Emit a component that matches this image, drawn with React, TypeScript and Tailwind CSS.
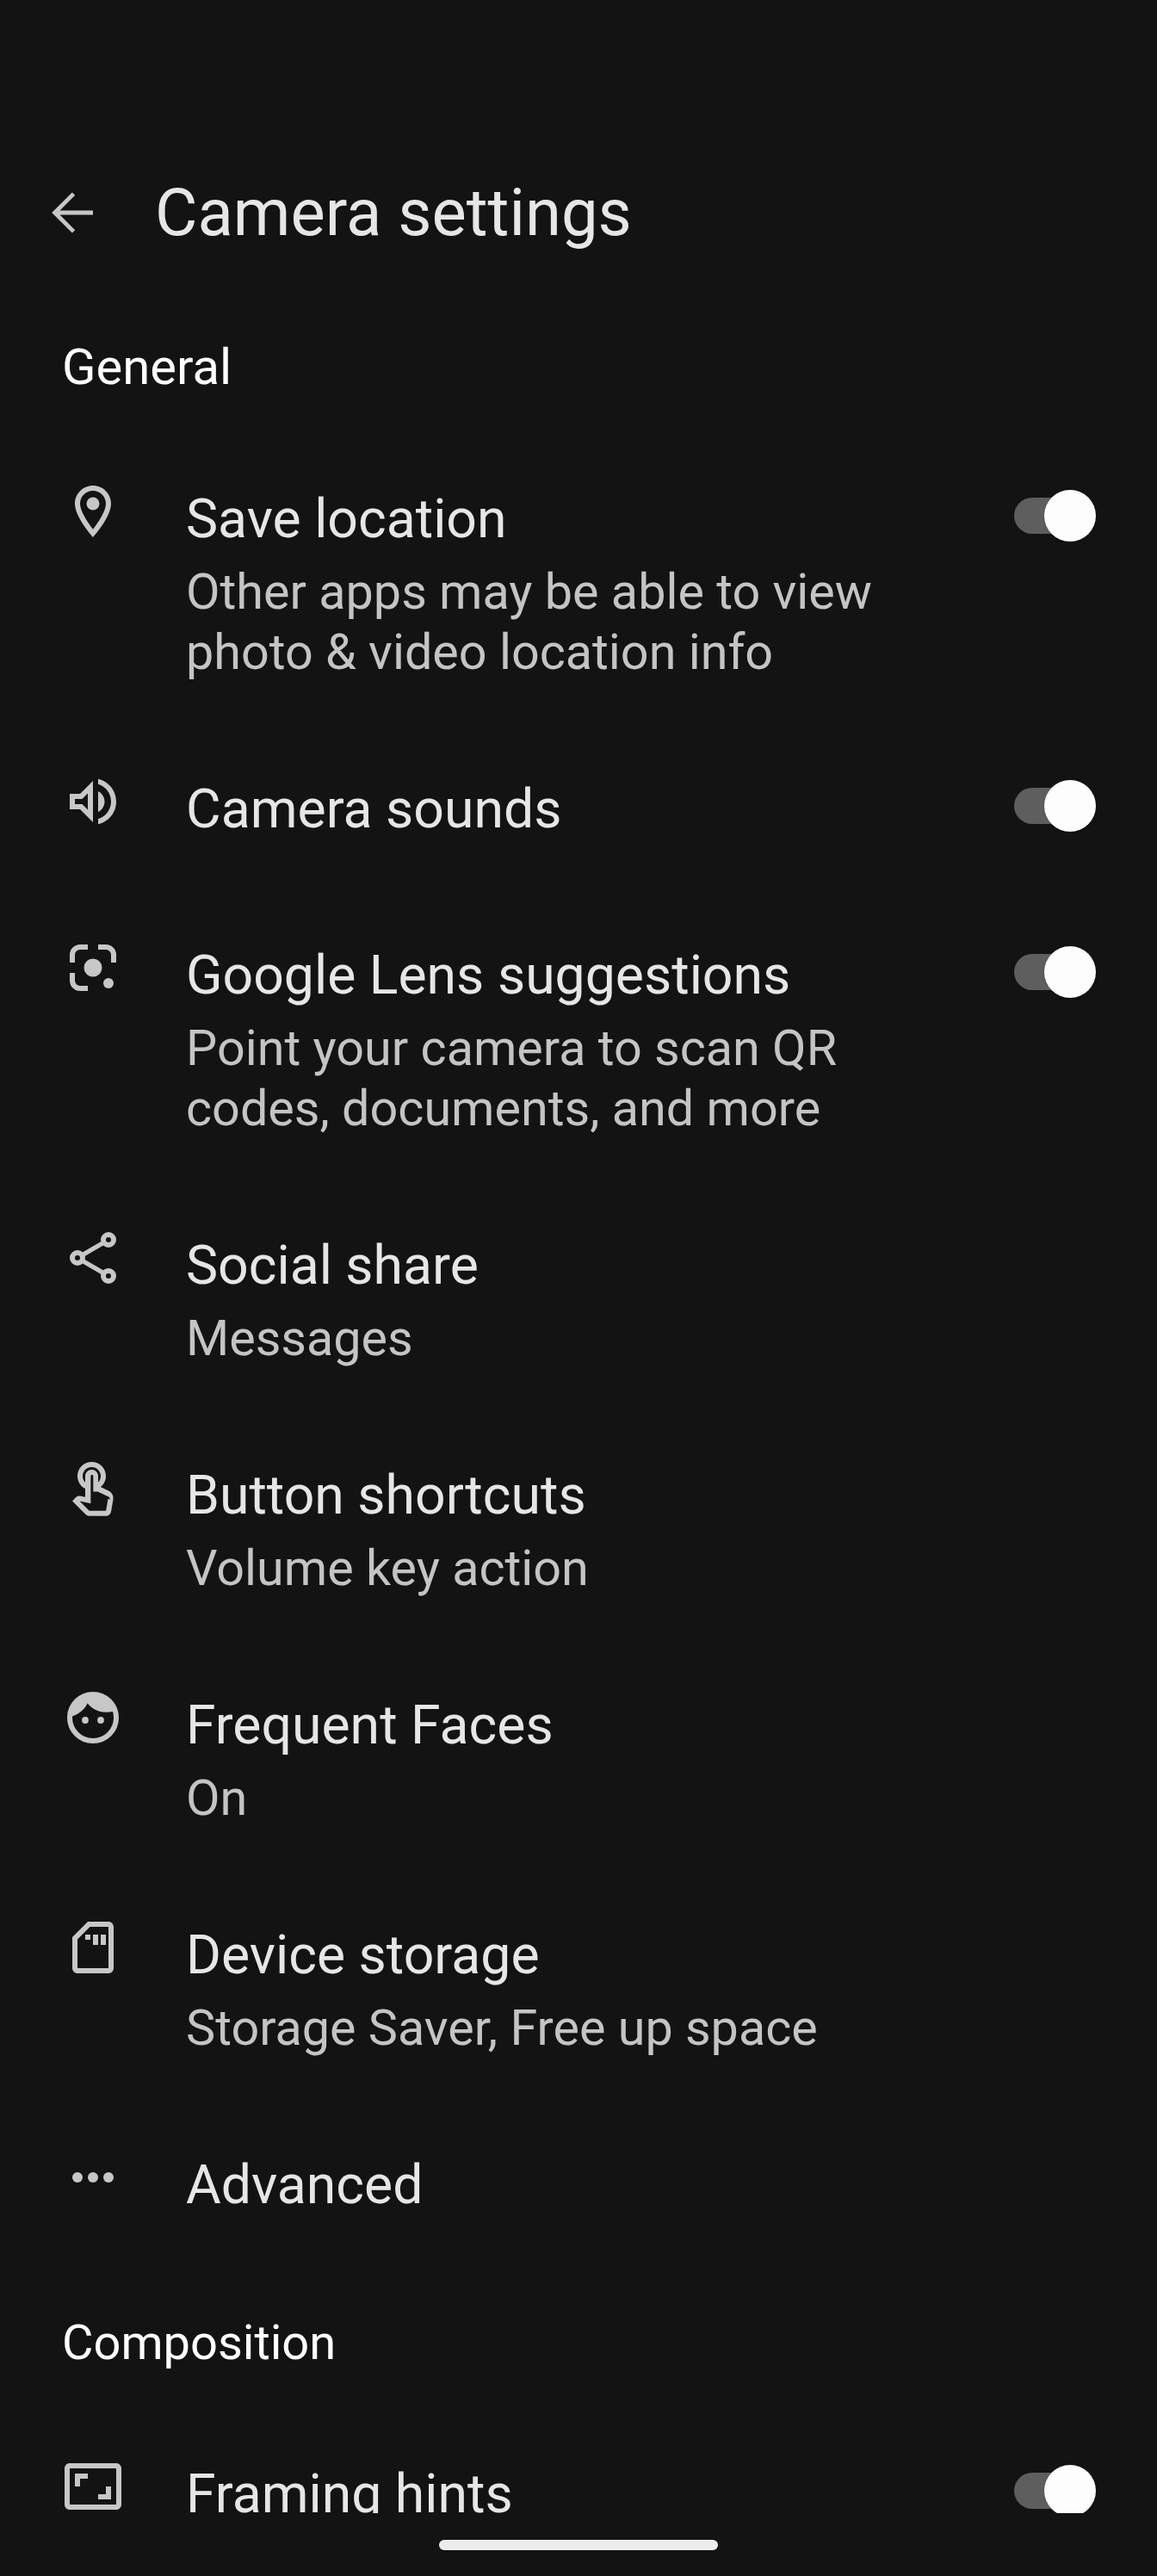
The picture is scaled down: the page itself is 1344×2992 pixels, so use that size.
import type { ReactNode } from "react";

function Toggle() {
  return (
    <div className="relative w-[95px] h-[60px] shrink-0 mt-[3px] flex items-center">
      <div className="w-[70px] h-[42px] rounded-full bg-[#5e5e5e]" />
      <div className="absolute right-0 top-0 w-[60px] h-[60px] rounded-full bg-[#fdfdfd] shadow" />
    </div>
  );
}

function Icon({ children }: { children: ReactNode }) {
  return (
    <svg viewBox="0 0 24 24" className="w-[72px] h-[72px] text-[#c7c7c7]" fill="currentColor">
      {children}
    </svg>
  );
}

const Pin = (
  <Icon>
    <path d="M12 2C8.14 2 5 5.14 5 9c0 5.25 7 13 7 13s7-7.75 7-13c0-3.86-3.14-7-7-7zM7 9c0-2.76 2.24-5 5-5s5 2.24 5 5c0 2.88-2.88 7.19-5 9.88C9.92 16.21 7 11.85 7 9z" />
    <circle cx="12" cy="9" r="2.5" />
  </Icon>
);

const Speaker = (
  <Icon>
    <path d="M3 9v6h4l5 5V4L7 9H3zm7-.17v6.34L7.83 13H5v-2h2.83L10 8.83zM16.5 12c0-1.77-1.02-3.29-2.5-4.03v8.05c1.48-.73 2.5-2.25 2.5-4.02zM14 3.23v2.06c2.89.86 5 3.54 5 6.71s-2.11 5.85-5 6.71v2.06c4.01-.91 7-4.49 7-8.77 0-4.28-2.99-7.86-7-8.77z" />
  </Icon>
);

const Lens = (
  <Icon>
    <path d="M10 3H7a4 4 0 0 0-4 4v3h2V7a2 2 0 0 1 2-2h3zM14 3h3a4 4 0 0 1 4 4v3h-2V7a2 2 0 0 0-2-2h-3zM3 14v3a4 4 0 0 0 4 4h3v-2H7a2 2 0 0 1-2-2v-3z" />
    <circle cx="12" cy="12" r="3.5" />
    <circle cx="18" cy="18" r="2" />
  </Icon>
);

const Share = (
  <Icon>
    <g fill="none" stroke="currentColor">
      <path strokeWidth="1.8" d="M16.3 6 7.7 11M7.7 13l8.6 5" />
      <circle cx="6" cy="12" r="2" strokeWidth="2" />
      <circle cx="18" cy="5" r="2" strokeWidth="2" />
      <circle cx="18" cy="19" r="2" strokeWidth="2" />
    </g>
  </Icon>
);

const Touch = (
  <Icon>
    <path
      transform="translate(0 .85)"
      d="M18.19 12.44l-3.24-1.62c1.25-.98 2.05-2.5 2.05-4.2 0-3.03-2.47-5.5-5.5-5.5S6 3.59 6 6.62c0 2.13 1.22 3.98 3 4.89v3.26c-2.15-.46-2.02-.44-2.26-.44-.53 0-1.03.21-1.41.59L4 16.31l5.09 5.09c.43.44 1.03.69 1.65.69h6.3c.98 0 1.81-.7 1.97-1.67l.8-4.71c.22-1.3-.43-2.59-1.62-3.27zm-.35 2.94l-.8 4.71h-6.3c-.09 0-.16-.04-.24-.12l-3.67-3.67 4.28.9V6.62c0-.28.22-.5.5-.5s.5.22.5.5v6h1.76l4.15 2.07c.4.2.62.63.54 1.06zM8 6.62c0-1.93 1.57-3.5 3.5-3.5S15 4.69 15 6.62c0 .95-.38 1.81-1 2.44V6.62c0-1.38-1.12-2.5-2.5-2.5S9 5.24 9 6.62v2.44c-.62-.63-1-1.49-1-2.44z"
    />
  </Icon>
);

const Face = (
  <Icon>
    <circle cx="12" cy="12" r="9" fill="none" stroke="currentColor" strokeWidth="2" />
    <path d="M12 2.5A9.5 9.5 0 0 0 3 11.7L4.1 11.4C6.6 10.6 8.8 8.8 9.9 6.4 11.4 8.5 14 9.9 17 9.9c1 0 2-.1 3-.3A9.5 9.5 0 0 0 12 2.5z" />
    <circle cx="9" cy="13" r="1.3" />
    <circle cx="15" cy="13" r="1.3" />
  </Icon>
);

const SdCard = (
  <Icon>
    <path d="M18 2h-8L4 8v12c0 1.1.9 2 2 2h12c1.1 0 2-.9 2-2V4c0-1.1-.9-2-2-2zm0 18H6V8.83L10.83 4H18v16z" />
    <path d="M9 7h2v2H9zM12 7h2v4h-2zM15 7h2v4h-2z" />
  </Icon>
);

const Dots = (
  <Icon>
    <circle cx="6" cy="12" r="2" />
    <circle cx="12" cy="12" r="2" />
    <circle cx="18" cy="12" r="2" />
  </Icon>
);

const Framing = (
  <Icon>
    <path d="M19 12h-2v3h-3v2h5v-5zM7 9h3V7H5v5h2V9zm14-6H3c-1.1 0-2 .9-2 2v14c0 1.1.9 2 2 2h18c1.1 0 2-.9 2-2V5c0-1.1-.9-2-2-2zm0 16H3V5h18v14z" />
  </Icon>
);

function Row({
  icon,
  title,
  lines,
  toggle,
}: {
  icon: ReactNode;
  title: string;
  lines?: string[];
  toggle?: boolean;
}) {
  return (
    <div className="flex items-start min-h-[193px] pl-[72px] pr-[71px] pt-[36px] pb-[74px]">
      <div className="w-[144px] shrink-0 -mt-[8px]">{icon}</div>
      <div className="flex-1 min-w-0">
        <div className="text-[62.5px] leading-[74px] text-[#e6e6e6]">{title}</div>
        {lines && (
          <div className="mt-[13px] text-[57.5px] leading-[70px] text-[#c4c4c4]">
            {lines.map((line) => (
              <div key={line}>{line}</div>
            ))}
          </div>
        )}
      </div>
      {toggle && <Toggle />}
    </div>
  );
}

export default function App() {
  return (
    <div className="relative w-[1344px] h-[2992px] overflow-hidden bg-[#131313] font-[375] font-['Roboto','Noto_Sans',sans-serif]">
      <div className="flex items-center h-[84px] mt-[205px] pl-[48px]">
        <svg viewBox="0 0 24 24" className="w-[72px] h-[72px] text-[#c7c7c7]" fill="none" stroke="currentColor" strokeWidth="1.6">
          <path d="M20 12H5.5M12.5 4.7 5.2 12l7.3 7.3" />
        </svg>
        <div className="ml-[60px] text-[76px] leading-[84px] text-[#e6e6e6]">Camera settings</div>
      </div>
      <div className="pl-[72px] mt-[107px] text-[58px] leading-[60px] text-white">General</div>
      <div className="mt-[74px]">
        <Row icon={Pin} title="Save location" lines={["Other apps may be able to view", "photo & video location info"]} toggle />
        <Row icon={Speaker} title="Camera sounds" toggle />
        <Row icon={Lens} title="Google Lens suggestions" lines={["Point your camera to scan QR", "codes, documents, and more"]} toggle />
        <Row icon={Share} title="Social share" lines={["Messages"]} />
        <Row icon={Touch} title="Button shortcuts" lines={["Volume key action"]} />
        <Row icon={Face} title="Frequent Faces" lines={["On"]} />
        <Row icon={SdCard} title="Device storage" lines={["Storage Saver, Free up space"]} />
        <Row icon={Dots} title="Advanced" />
      </div>
      <div className="pl-[72px] mt-[33px] text-[56px] leading-[60px] text-white">Composition</div>
      <div className="mt-[73px] h-[95px] overflow-hidden">
        <Row icon={Framing} title="Framing hints" toggle />
      </div>
      <div className="absolute left-[510px] top-[2950px] w-[324px] h-[12px] rounded-full bg-[#ececec]" />
    </div>
  );
}
